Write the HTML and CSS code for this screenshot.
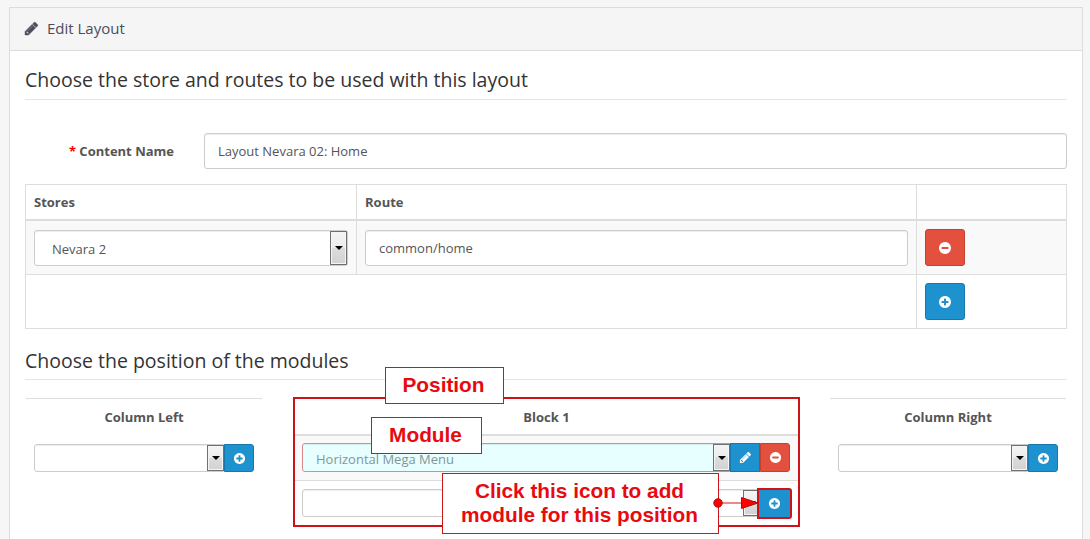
FILE: index.html
```html
<!DOCTYPE html>
<html lang="en">
<head>
<meta charset="utf-8">
<title>Edit Layout</title>
<link rel="stylesheet" href="styles.css">
</head>
<body>
<svg class="defs" aria-hidden="true">
  <symbol id="pencil" viewBox="0 0 1792 1792"><path d="M491 1536l91-91-235-235-91 91v107h128v128h107zm523-928q0-22-22-22-10 0-17 7l-542 542q-7 7-7 17 0 22 22 22 10 0 17-7l542-542q7-7 7-17zm-54-192l416 416-832 832h-416v-416zm683 96q0 53-37 90l-166 166-416-416 166-165q36-38 90-38 53 0 91 38l235 234q37 39 37 91z"/></symbol>
  <symbol id="plus" viewBox="0 0 1792 1792"><path d="M1344 960v-128q0-26-19-45t-45-19h-256v-256q0-26-19-45t-45-19h-128q-26 0-45 19t-19 45v256h-256q-26 0-45 19t-19 45v128q0 26 19 45t45 19h256v256q0 26 19 45t45 19h128q26 0 45-19t19-45v-256h256q26 0 45-19t19-45zm320-64q0 209-103 385.5t-279.5 279.5-385.5 103-385.5-103-279.5-279.5-103-385.5 103-385.5 279.5-279.5 385.5-103 385.5 103 279.5 279.5 103 385.5z"/></symbol>
  <symbol id="minus" viewBox="0 0 1792 1792"><path d="M1344 960v-128q0-26-19-45t-45-19h-768q-26 0-45 19t-19 45v128q0 26 19 45t45 19h768q26 0 45-19t19-45zm320-64q0 209-103 385.5t-279.5 279.5-385.5 103-385.5-103-279.5-279.5-103-385.5 103-385.5 279.5-279.5 385.5-103 385.5 103 279.5 279.5 103 385.5z"/></symbol>
</svg>
<main class="panel">
  <header class="panel-heading"><svg class="icon icon-title"><use href="#pencil"/></svg><span>Edit Layout</span></header>
  <div class="panel-body">
    <h2 class="legend">Choose the store and routes to be used with this layout</h2>
    <div class="form-row">
      <span class="label"><span class="required">*</span> Content Name</span>
      <div class="control">Layout Nevara 02: Home</div>
    </div>
    <div class="routes">
      <div class="routes-row routes-head"><div>Stores</div><div>Route</div><div></div></div>
      <div class="routes-row routes-item">
        <div><div class="control select"><span>Nevara 2</span><i class="arrow"></i></div></div>
        <div><div class="control">common/home</div></div>
        <div><span class="btn danger"><svg class="icon"><use href="#minus"/></svg></span></div>
      </div>
      <div class="routes-row routes-foot"><div></div><div><span class="btn primary"><svg class="icon"><use href="#plus"/></svg></span></div></div>
    </div>
    <h2 class="legend legend-second">Choose the position of the modules</h2>
    <div class="positions">
      <section class="position">
        <h3>Column Left</h3>
        <div class="group"><div class="control select small"><span></span><i class="arrow"></i></div><span class="btn primary small"><svg class="icon"><use href="#plus"/></svg></span></div>
      </section>
      <section class="position block">
        <h3>Block 1</h3>
        <div class="group filled"><div class="control select small chosen"><span>Horizontal Mega Menu</span><i class="arrow"></i></div><span class="btn primary small"><svg class="icon"><use href="#pencil"/></svg></span><span class="btn danger small"><svg class="icon"><use href="#minus"/></svg></span></div>
        <div class="group"><div class="control select small"><span></span><i class="arrow"></i></div><span class="btn primary small marked"><svg class="icon"><use href="#plus"/></svg></span></div>
      </section>
      <section class="position">
        <h3>Column Right</h3>
        <div class="group"><div class="control select small"><span></span><i class="arrow"></i></div><span class="btn primary small"><svg class="icon"><use href="#plus"/></svg></span></div>
      </section>
    </div>
  </div>
</main>
<div class="callout callout-position">Position</div>
<div class="callout callout-module">Module</div>
<div class="callout callout-add">Click this icon to add<br>module for this position</div>
<svg class="pointer" viewBox="0 0 50 16"><path d="M6 8H30" stroke="#e01010"/><circle cx="6" cy="8" r="4.2" fill="#f00" stroke="#a00c14"/><path d="M29.500 2.500L46 8L29.500 13.500Z" fill="#f00" stroke="#b00c14"/></svg>
</body>
</html>
```
FILE: styles.css
```css
* { box-sizing: border-box; }
body { margin: 0; height: 539px; overflow: hidden; background: #f6f6f6; color: #555; font: 13px/20px "Open Sans", sans-serif; position: relative; display: flow-root; }
.defs { position: absolute; width: 0; height: 0; }
.icon { display: block; width: 14px; height: 14px; fill: currentColor; }
.panel { margin: 7px 7px 0 9px; height: 532px; border: 1px solid #dcdcdc; border-bottom: 0; background: #fff; }
.panel-heading { display: flex; align-items: center; height: 43px; padding: 0 0 2px 14px; gap: 8px; border-bottom: 1px solid #dcdcdc; background: #f5f5f5; color: #4c4d5a; font-size: 15px; }
.icon-title { width: 15px; height: 15px; margin-top: 1px; stroke: currentColor; stroke-width: 60px; }
.panel-body { padding: 15px 15px 0; }
.legend { margin: 0; height: 34px; border-bottom: 1px solid #e5e5e5; color: #333; font-size: 19.5px; font-weight: 400; line-height: 27px; }
.form-row { display: grid; grid-template-columns: 149px 1fr; column-gap: 30px; margin-top: 33px; align-items: center; }
.label { text-align: right; font-weight: 700; }
.required { color: #f00; }
.control { height: 36px; padding: 0 13px; border: 1px solid #ccc; border-radius: 3px; background: #fff; line-height: 35px; box-shadow: inset 0 1px 1px rgba(0,0,0,.075); }
.select { display: flex; justify-content: space-between; padding: 0 0 0 17px; }
.arrow { display: flex; align-items: center; justify-content: center; width: 17px; border: 1px solid #707070; background: linear-gradient(#f4f4f4, #ececec 48%, #dcdcdc 50%, #d2d2d2); box-shadow: inset 0 0 0 1px #f5f5f5; }
.arrow::before { content: ""; border: 4px solid transparent; border-top-color: #000; border-bottom: 0; }
.btn { display: flex; align-items: center; justify-content: center; width: 40px; height: 37px; border: 1px solid; border-radius: 3px; color: #fff; }
.primary { background: #1e91cf; border-color: #1978ab; }
.danger { background: #e3503e; border-color: #c4402f; }
.routes { margin-top: 15px; border: 1px solid #ddd; }
.routes-row { display: grid; grid-template-columns: 331px 560px 1fr; }
.routes-row > div { padding: 8px; border-right: 1px solid #ddd; }
.routes-row > div:last-child { border-right: 0; }
.routes-head { height: 36px; border-bottom: 2px solid #ddd; font-weight: 700; }
.routes-head > div { padding-top: 7px; }
.routes-item { height: 54px; border-bottom: 1px solid #ddd; background: #f9f9f9; }
.routes-item .control { margin-top: 1px; }
.routes-item .select { line-height: 37px; }
.routes-foot { height: 53px; grid-template-columns: 891px 1fr; }
.legend-second { margin-top: 17px; line-height: 29px; }
.positions { display: grid; grid-template-columns: 236px 508px 236px; column-gap: 30px; align-items: start; margin: 18px 0 0 1px; }
.position { border-top: 1px solid #ddd; }
.position h3 { margin: 0; height: 37px; padding-top: 8px; font-size: 13px; font-weight: 700; line-height: 20px; text-align: center; }
.group { display: flex; padding: 8px; }
.control.small { flex: 1; height: 28px; padding-left: 13px; border-radius: 3px 0 0 3px; line-height: 28px; }
.small .arrow { margin-right: -1px; }
.btn.small { width: 30px; height: 28px; border-radius: 0; }
.btn.small:last-child { border-radius: 0 3px 3px 0; }
.small .icon { width: 13px; height: 13px; }
.positions .block { height: 130px; margin: -1px 0 0 1px; border: 2px solid #cf1217; }
.block h3 { border-bottom: 2px solid #ddd; }
.block .group { padding: 7px 8px 8px 7px; }
.block .group:last-child { padding-top: 8px; }
.block .filled { height: 45px; border-bottom: 1px solid #ddd; background: #f9f9f9; }
.filled .small { height: 29px; }
.control.chosen { border-color: #dc8a8a; background: #e8ffff; color: #839696; line-height: 30px; }
.btn.marked { width: 35px; height: 31px; margin: -1px -2px -2px -3px; border: 2px solid #cf1217; border-radius: 0; }
.callout { position: absolute; display: grid; place-items: center; padding: 0 2px 2px 0; border: 1px solid #c9151b; background: #fff; color: #e80a0f; font: 700 20.8px/24px "Liberation Sans", Arial, sans-serif; text-align: center; }
.callout-position { left: 385px; top: 367px; width: 119px; height: 37px; }
.callout-module { left: 371px; top: 417px; width: 111px; height: 37px; }
.callout-add { left: 442px; top: 473px; width: 277px; height: 61px; }
.pointer { position: absolute; left: 712px; top: 495px; width: 50px; height: 16px; }
```
